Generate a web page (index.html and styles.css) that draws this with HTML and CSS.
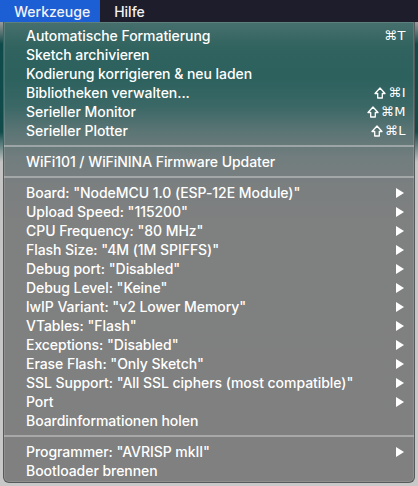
FILE: index.html
```html
<!DOCTYPE html>
<html lang="de">
<head>
<meta charset="utf-8">
<link rel="stylesheet" href="styles.css">
</head>
<body>
<div class="menubar">
  <span class="mb-item active">Werkzeuge</span>
  <span class="mb-item">Hilfe</span>
</div>
<div class="stage">
  <div class="menu">
    <div class="row"><span class="label">Automatische Formatierung</span><span class="key">⌘T</span></div>
    <div class="row"><span class="label">Sketch archivieren</span></div>
    <div class="row"><span class="label">Kodierung korrigieren &amp; neu laden</span></div>
    <div class="row"><span class="label">Bibliotheken verwalten...</span><span class="key"><svg class="shift" viewBox="0 0 12 12"><path d="M6 1 L11 6.5 H8.3 V11 H3.7 V6.5 H1 Z" fill="none" stroke="#fff" stroke-width="1.3" stroke-linejoin="round"/></svg>⌘I</span></div>
    <div class="row"><span class="label">Serieller Monitor</span><span class="key"><svg class="shift" viewBox="0 0 12 12"><path d="M6 1 L11 6.5 H8.3 V11 H3.7 V6.5 H1 Z" fill="none" stroke="#fff" stroke-width="1.3" stroke-linejoin="round"/></svg>⌘M</span></div>
    <div class="row"><span class="label">Serieller Plotter</span><span class="key"><svg class="shift" viewBox="0 0 12 12"><path d="M6 1 L11 6.5 H8.3 V11 H3.7 V6.5 H1 Z" fill="none" stroke="#fff" stroke-width="1.3" stroke-linejoin="round"/></svg>⌘L</span></div>
    <div class="sep"></div>
    <div class="row"><span class="label">WiFi101 / WiFiNINA Firmware Updater</span></div>
    <div class="sep"></div>
    <div class="row"><span class="label">Board: "NodeMCU 1.0 (ESP-12E Module)"</span><span class="arrow"></span></div>
    <div class="row"><span class="label">Upload Speed: "115200"</span><span class="arrow"></span></div>
    <div class="row"><span class="label">CPU Frequency: "80 MHz"</span><span class="arrow"></span></div>
    <div class="row"><span class="label">Flash Size: "4M (1M SPIFFS)"</span><span class="arrow"></span></div>
    <div class="row"><span class="label">Debug port: "Disabled"</span><span class="arrow"></span></div>
    <div class="row"><span class="label">Debug Level: "Keine"</span><span class="arrow"></span></div>
    <div class="row"><span class="label">lwIP Variant: "v2 Lower Memory"</span><span class="arrow"></span></div>
    <div class="row"><span class="label">VTables: "Flash"</span><span class="arrow"></span></div>
    <div class="row"><span class="label">Exceptions: "Disabled"</span><span class="arrow"></span></div>
    <div class="row"><span class="label">Erase Flash: "Only Sketch"</span><span class="arrow"></span></div>
    <div class="row"><span class="label">SSL Support: "All SSL ciphers (most compatible)"</span><span class="arrow"></span></div>
    <div class="row"><span class="label">Port</span><span class="arrow"></span></div>
    <div class="row"><span class="label">Boardinformationen holen</span></div>
    <div class="sep"></div>
    <div class="row"><span class="label">Programmer: "AVRISP mkII"</span><span class="arrow"></span></div>
    <div class="row"><span class="label">Bootloader brennen</span></div>
  </div>
</div>
</body>
</html>
```
FILE: styles.css
```css
html, body {
  margin: 0;
  padding: 0;
}
body {
  width: 418px;
  height: 486px;
  overflow: hidden;
  background: #cacaca;
  font-family: "Inter", "Open Sans", sans-serif;
  color: #fff;
}
.menubar {
  height: 22px;
  background: #1d1d2b;
  display: flex;
  align-items: stretch;
}
.mb-item {
  display: flex;
  align-items: center;
  padding: 0 9px 0 14px;
  font-size: 14px;
  font-weight: 500;
  color: #f2f2f6;
}
.mb-item.active {
  background: #1c5ed4;
  padding: 0 10px 0 14px;
}
.stage {
  height: 464px;
  padding: 0 3px 0 3px;
  background: linear-gradient(180deg, #9a9a9a 0px, #0f4b4a 22px, #114c4b 110px, #c4c4c4 140px, #c8c8c8 100%);
}
.menu {
  height: 461px;
  box-sizing: border-box;
  border: 1px solid #555a5a;
  border-top: none;
  border-radius: 0 0 6px 6px;
  padding: 4px 0 4px 0;
  background: linear-gradient(180deg, #47706d 0px, #31635f 25px, #2c615e 55px, #3b6866 85px, #5c7575 110px, #717d7e 135px, #7b7f80 165px, #7f8080 200px, #808080 100%);
  box-shadow: inset 0 0 0 1px rgba(255,255,255,0.12);
}
.row {
  height: 19px;
  display: flex;
  align-items: center;
  padding: 0 9px 0 22px;
  font-size: 14px;
  font-weight: 500;
  letter-spacing: -0.05px;
  white-space: nowrap;
}
.label {
  flex: 1;
}
.key {
  display: flex;
  align-items: center;
  font-family: "DejaVu Sans", sans-serif;
  font-size: 13px;
  letter-spacing: 0.5px;
  margin-right: -1px;
}
.shift {
  width: 12px;
  height: 12px;
  margin-right: 2px;
}
.arrow {
  width: 0;
  height: 0;
  border-top: 5px solid transparent;
  border-bottom: 5px solid transparent;
  border-left: 8px solid #fff;
  margin-right: 1px;
}
.sep {
  height: 12px;
  display: flex;
  align-items: center;
}
.sep::before {
  content: "";
  flex: 1;
  height: 2px;
  background: rgba(200, 200, 200, 0.55);
}
```
